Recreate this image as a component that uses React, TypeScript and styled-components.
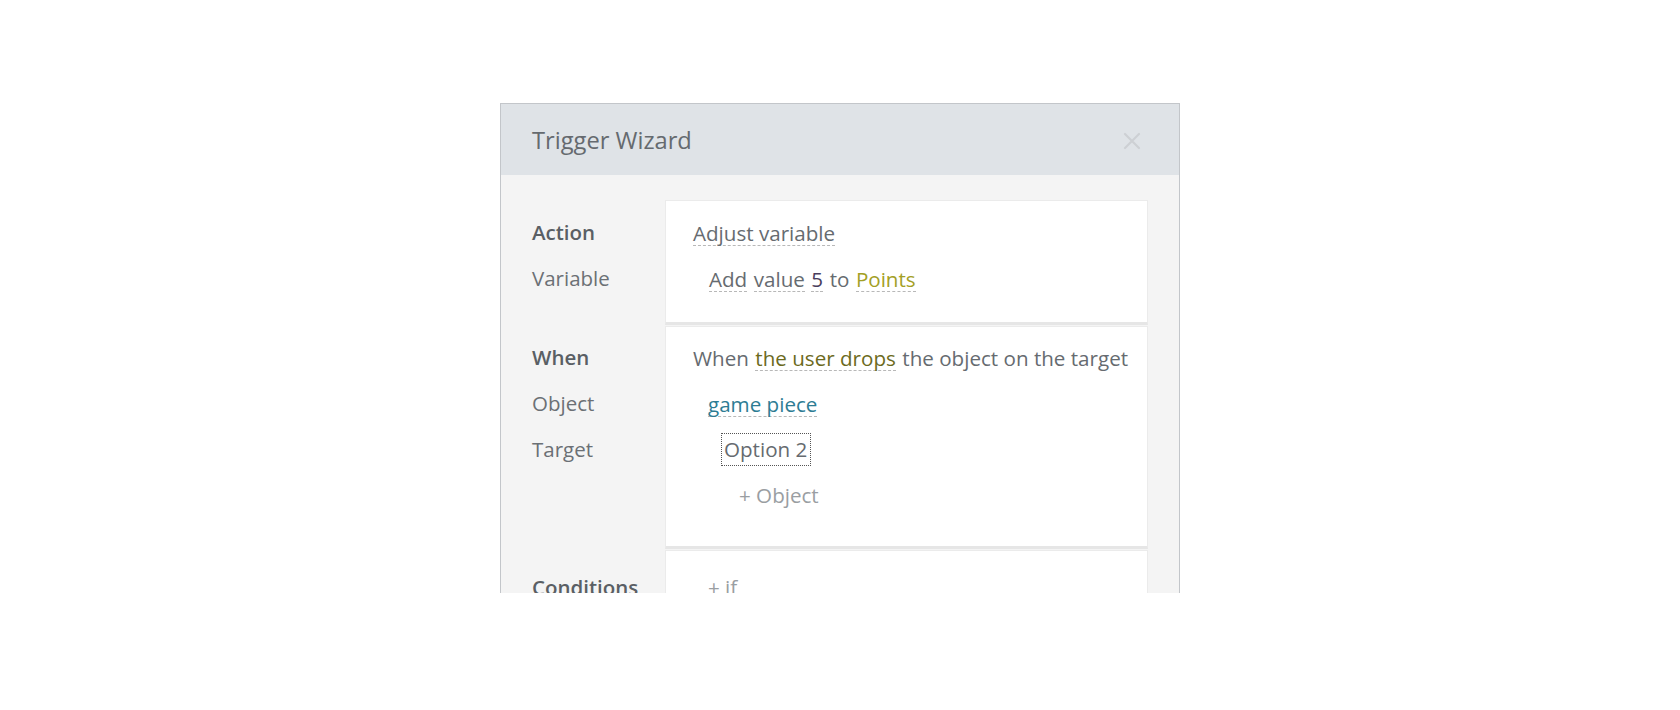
import styled, { createGlobalStyle } from "styled-components";

const GlobalStyle = createGlobalStyle`
  html, body {
    margin: 0;
    padding: 0;
    background: #ffffff;
  }
  body {
    font-family: "Open Sans", "Noto Sans", Arial, sans-serif;
  }
`

type Token = { text: string; tone?: "plain" | "number" | "event" | "variable" | "object"; link?: boolean }

const actionTokens: Token[] = [
    { text: "Add", link: true },
    { text: "value", link: true },
    { text: "5", tone: "number", link: true },
    { text: "to" },
    { text: "Points", tone: "variable", link: true },
]

const whenTokens: Token[] = [
    { text: "When" },
    { text: "the user drops", tone: "event", link: true },
    { text: "the object on the target" },
]

const renderTokens = (tokens: Token[]) =>
    tokens.map((t, i) => (
        <Word key={i} $tone={t.tone || "plain"} $link={!!t.link}>
            {t.text}
        </Word>
    ))

export default function App() {
    return (
        <>
            <GlobalStyle />
            <Stage>
                <Dialog>
                    <Header>
                        <Title>Trigger Wizard</Title>
                        <CloseButton aria-label="close">
                            <svg width="18" height="18" viewBox="0 0 18 18">
                                <path d="M2 2 L16 16 M16 2 L2 16" stroke="#cdd0d4" strokeWidth="2.2" strokeLinecap="round" />
                            </svg>
                        </CloseButton>
                    </Header>
                    <Body>
                        <Section>
                            <Labels $pt={9}>
                                <Label $strong>Action</Label>
                                <Label>Variable</Label>
                            </Labels>
                            <Card $pt={8} $pb={21}>
                                <Row $indent={27}>
                                    <Word $tone="plain" $link>Adjust variable</Word>
                                </Row>
                                <Row $indent={43}>{renderTokens(actionTokens)}</Row>
                            </Card>
                        </Section>
                        <Section>
                            <Labels $pt={8}>
                                <Label $strong>When</Label>
                                <Label>Object</Label>
                                <Label>Target</Label>
                            </Labels>
                            <Card $pt={7} $pb={28}>
                                <Row $indent={27}>{renderTokens(whenTokens)}</Row>
                                <Row $indent={42}>
                                    <Word $tone="object" $link>game piece</Word>
                                </Row>
                                <Row $indent={55}>
                                    <Focused>Option 2</Focused>
                                </Row>
                                <Row $indent={73}>
                                    <AddLink>+ Object</AddLink>
                                </Row>
                            </Card>
                        </Section>
                        <Section>
                            <Labels $pt={14}>
                                <Label $strong>Conditions</Label>
                            </Labels>
                            <Card $pt={13} $pb={20}>
                                <Row $indent={42}>
                                    <AddLink>+ if</AddLink>
                                </Row>
                            </Card>
                        </Section>
                    </Body>
                </Dialog>
            </Stage>
        </>
    )
}

const Stage = styled.div`
  width: 100%;
  height: 710px;
  display: flex;
  justify-content: center;
  align-items: flex-start;
  padding-top: 103px;
  box-sizing: border-box;
  overflow: hidden;
`

const Dialog = styled.div`
  width: 680px;
  height: 490px;
  box-sizing: border-box;
  border: 1px solid #c3c6ca;
  border-bottom: 0;
  background: #f4f4f4;
  overflow: hidden;
  display: flex;
  flex-direction: column;
`

const Header = styled.div`
  height: 71px;
  flex-shrink: 0;
  background: #dfe3e7;
  display: flex;
  align-items: center;
  justify-content: space-between;
  padding: 0 38px 0 31px;
`

const Title = styled.div`
  font-size: 23.7px;
  color: #656a6f;
  padding-top: 1px;
`

const CloseButton = styled.div`
  width: 18px;
  height: 18px;
  display: flex;
  align-items: center;
  justify-content: center;
  margin-top: 2px;
`

const Body = styled.div`
  padding: 25px 31px 0 31px;
  display: flex;
  flex-direction: column;
  gap: 1px;
`

const Section = styled.div`
  display: grid;
  grid-template-columns: 133px 1fr;
`

const Labels = styled.div<{ $pt: number }>`
  display: flex;
  flex-direction: column;
  padding-top: ${p => p.$pt}px;
`

const Label = styled.div<{ $strong?: boolean }>`
  height: 46px;
  line-height: 46px;
  font-size: 20.5px;
  white-space: nowrap;
  color: ${p => (p.$strong ? "#5a5f64" : "#6b7075")};
  font-weight: ${p => (p.$strong ? 600 : 400)};
`

const Card = styled.div<{ $pt: number; $pb: number }>`
  background: #ffffff;
  border: 1px solid #ebebeb;
  border-bottom: 3px solid #e6e6e6;
  padding: ${p => p.$pt}px 0 ${p => p.$pb}px 0;
  display: flex;
  flex-direction: column;
`

const Row = styled.div<{ $indent: number }>`
  height: 46px;
  display: flex;
  align-items: center;
  gap: 6.5px;
  padding-left: ${p => p.$indent}px;
  font-size: 20.6px;
  white-space: nowrap;
`

const toneColor = {
    plain: "#666b70",
    number: "#4a3d5c",
    event: "#6c6a1d",
    variable: "#a39f25",
    object: "#2d7c93",
}

const Word = styled.span<{ $tone: keyof typeof toneColor; $link: boolean }>`
  color: ${p => toneColor[p.$tone]};
  line-height: 24px;
  border-bottom: 1px dashed ${p => (p.$link ? "#b8b8b8" : "transparent")};
  margin-top: 2px;
`

const Focused = styled.span`
  color: #666b70;
  line-height: 29px;
  padding: 1px 3px 1px 2px;
  border: 1px dotted #555;
`

const AddLink = styled.span`
  color: #9a9ea2;
`
